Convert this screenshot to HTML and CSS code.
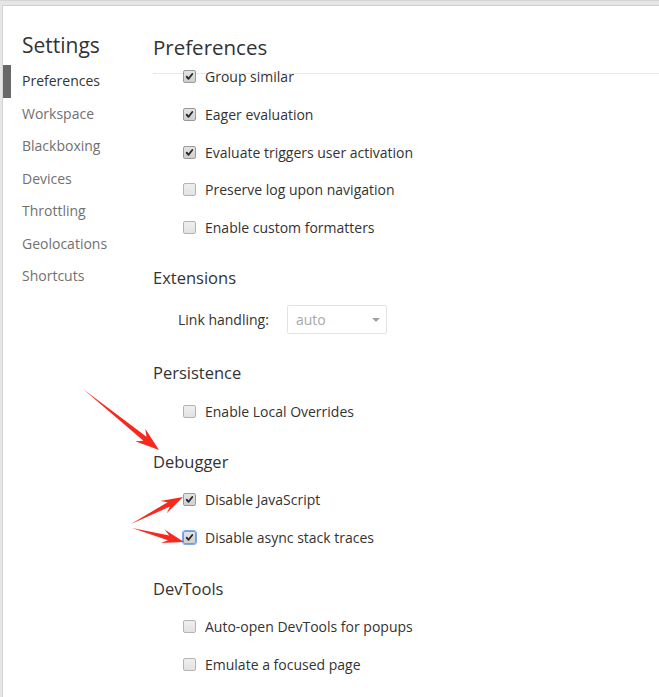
FILE: index.html
```html
<!DOCTYPE html>
<html>
<head>
<meta charset="utf-8">
<link rel="stylesheet" href="styles.css">
</head>
<body>
<div class="window">
  <aside class="sidebar">
    <div class="sidebar-title">Settings</div>
    <nav class="nav">
      <div class="nav-item selected">Preferences</div>
      <div class="nav-item">Workspace</div>
      <div class="nav-item">Blackboxing</div>
      <div class="nav-item">Devices</div>
      <div class="nav-item">Throttling</div>
      <div class="nav-item">Geolocations</div>
      <div class="nav-item">Shortcuts</div>
    </nav>
  </aside>
  <main class="content">
    <div class="content-title">Preferences</div>
    <div class="list">
      <label class="row"><span class="cb checked"><svg viewBox="0 0 13 13"><path d="M3.2 6.8 L5.4 9.2 L9.8 3.6" /></svg></span>Group similar</label>
      <label class="row"><span class="cb checked"><svg viewBox="0 0 13 13"><path d="M3.2 6.8 L5.4 9.2 L9.8 3.6" /></svg></span>Eager evaluation</label>
      <label class="row"><span class="cb checked"><svg viewBox="0 0 13 13"><path d="M3.2 6.8 L5.4 9.2 L9.8 3.6" /></svg></span>Evaluate triggers user activation</label>
      <label class="row"><span class="cb"></span>Preserve log upon navigation</label>
      <label class="row"><span class="cb"></span>Enable custom formatters</label>

      <div class="section">Extensions</div>
      <div class="field-row">
        <span class="field-label">Link handling:</span>
        <span class="select">auto<span class="caret"></span></span>
      </div>

      <div class="section">Persistence</div>
      <label class="row"><span class="cb"></span>Enable Local Overrides</label>

      <div class="section">Debugger</div>
      <label class="row"><span class="cb checked"><svg viewBox="0 0 13 13"><path d="M3.2 6.8 L5.4 9.2 L9.8 3.6" /></svg></span>Disable JavaScript</label>
      <label class="row"><span class="cb checked focused"><svg viewBox="0 0 13 13"><path d="M3.2 6.8 L5.4 9.2 L9.8 3.6" /></svg></span>Disable async stack traces</label>

      <div class="section">DevTools</div>
      <label class="row"><span class="cb"></span>Auto-open DevTools for popups</label>
      <label class="row"><span class="cb"></span>Emulate a focused page</label>
    </div>
  </main>
</div>
<svg class="annotations" width="659" height="697" viewBox="0 0 659 697">
  <polygon points="83,388 146.5,435.8 145.3,427.7 159,449 135.3,440.2 143.4,439.7" />
  <polygon points="131,523 167.65,501.15 160.24,499.93 183,496 166.7,512.35 169.95,505.59" />
  <polygon points="132,527 169.2,534.43 164.58,528.52 184,541 160.94,542.04 167.9,539.25" />
</svg>
</body>
</html>
```
FILE: styles.css
```css
html, body {
  margin: 0;
  padding: 0;
}
body {
  width: 659px;
  height: 697px;
  overflow: hidden;
  background: #e6e6e6;
  font-family: "Open Sans", "Noto Sans", sans-serif;
  color: #333;
  position: relative;
  padding-top: 4px;
  box-sizing: border-box;
  border-top: 1px solid #d6d6d6;
}
.window {
  margin-left: 2px;
  height: 100%;
  background: #fff;
  border-top: 1px solid #cfcfcf;
  border-left: 1px solid #d4d4d4;
  display: flex;
}
.sidebar {
  width: 150px;
  flex: none;
}
.sidebar-title {
  font-size: 21px;
  padding-left: 19px;
  padding-top: 24px;
  height: 35px;
  line-height: 30px;
  color: #333;
}
.nav {
  display: flex;
  flex-direction: column;
}
.nav-item {
  height: 32.5px;
  line-height: 32px;
  padding-left: 19px;
  font-size: 14px;
  color: #717171;
}
.nav-item.selected {
  color: #333;
  box-shadow: inset 8px 0 0 #686868;
}
.content {
  flex: 1;
  min-width: 0;
}
.content-title {
  font-size: 20.5px;
  height: 68px;
  line-height: 30px;
  padding-top: 26px;
  border-bottom: 1px solid #e8e8e8;
  color: #333;
  box-sizing: border-box;
}
.list {
  margin-top: -16px;
  display: flex;
  flex-direction: column;
}
.row {
  height: 37.7px;
  display: flex;
  align-items: center;
  padding-left: 30px;
  font-size: 14px;
  color: #333;
}
.cb {
  width: 11px;
  height: 11px;
  border: 1px solid #b4b4b4;
  border-radius: 2px;
  background: linear-gradient(#efefef, #e2e2e2);
  margin-right: 9px;
  flex: none;
  position: relative;
  display: flex;
}
.cb.checked {
  border-color: #9a9a9a;
  background: linear-gradient(#e4e4e4, #cfcfcf);
}
.cb.focused {
  outline: 1px solid #7fa8ea;
  border-color: #6f9be0;
}
.cb svg {
  width: 11px;
  height: 11px;
}
.cb svg path {
  fill: none;
  stroke: #2a2a2a;
  stroke-width: 2.2;
  stroke-linecap: round;
  stroke-linejoin: round;
}
.section {
  margin-top: 13px;
  height: 38px;
  line-height: 38px;
  font-size: 16.5px;
  color: #333;
}
.field-row {
  height: 44px;
  display: flex;
  align-items: center;
  padding-left: 25px;
  font-size: 14px;
}
.field-label {
  width: 109px;
  color: #333;
}
.select {
  width: 100px;
  height: 29px;
  box-sizing: border-box;
  border: 1px solid #e3e3e3;
  border-radius: 2px;
  display: flex;
  align-items: center;
  padding-left: 8px;
  color: #a8a8a8;
  position: relative;
}
.caret {
  position: absolute;
  right: 6px;
  top: 12px;
  width: 0;
  height: 0;
  border-left: 4px solid transparent;
  border-right: 4px solid transparent;
  border-top: 4px solid #a0a0a0;
}
.annotations {
  position: absolute;
  left: 0;
  top: 0;
  pointer-events: none;
}
.annotations polygon {
  fill: #f7291f;
}
```
